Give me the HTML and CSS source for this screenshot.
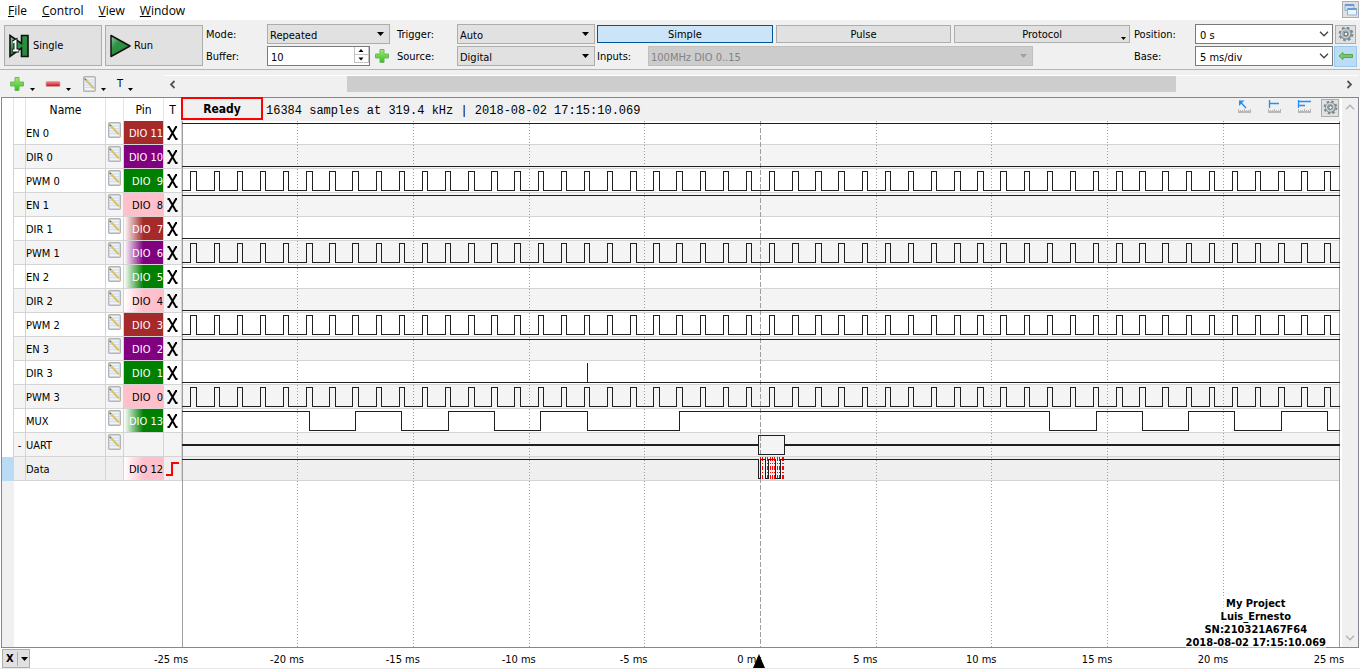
FILE: index.html
```
<!DOCTYPE html>
<html lang="en">
<head>
<meta charset="utf-8">
<title>Logic Analyzer</title>
<link rel="stylesheet" href="styles.css">
</head>
<body>
<svg class="defs" aria-hidden="true">
  <defs>
    <linearGradient id="greenFill" x1="0" y1="0" x2="1" y2="1"><stop offset="0" stop-color="#a5cfae"/><stop offset=".35" stop-color="#2f9143"/><stop offset="1" stop-color="#25883d"/></linearGradient>
    <linearGradient id="plusFill" x1="0" y1="0" x2="0" y2="1"><stop offset="0" stop-color="#a4ec7a"/><stop offset="1" stop-color="#2fbe1c"/></linearGradient>
    <linearGradient id="minusFill" x1="0" y1="0" x2="0" y2="1"><stop offset="0" stop-color="#f08a8a"/><stop offset="1" stop-color="#c40d1c"/></linearGradient>
  </defs>
  <symbol id="plus" viewBox="0 0 16 16"><path d="M6 1.500h4v4.500h4.500v4H10v4.500H6V10H1.500V6H6z" fill="url(#plusFill)" stroke="#6fb85c"/></symbol>
  <symbol id="minus" viewBox="0 0 16 16"><rect x="1" y="5.500" width="14" height="5" rx="1" fill="url(#minusFill)" stroke="#d9a0a3" stroke-width=".8"/></symbol>
  <symbol id="note" viewBox="0 0 13 16"><rect x=".7" y=".7" width="11.600" height="14.600" rx="1" fill="#edf3fa" stroke="#b4b4b4" stroke-width="1.400"/><path d="M2 4h9M2 6.500h9M2 9h9M2 11.500h9" stroke="#c9dcf0"/><path d="M2.500 3.500l8.500 9" stroke="#d9c26a" stroke-width="2"/><path d="M1.500 2.500l1.500 1.500" stroke="#777" stroke-width="1.400"/></symbol>
  <symbol id="caret" viewBox="0 0 7 4"><path d="M0 0h7L3.500 4z"/></symbol>
  <symbol id="chevron" viewBox="0 0 10 6"><path d="M1 .8l4 4 4-4" fill="none" stroke="currentColor" stroke-width="1.300"/></symbol>
  <symbol id="gear" viewBox="0 0 16 16"><circle cx="8" cy="8" r="6.300" fill="none" stroke="#7d8a92" stroke-width="2.200" stroke-dasharray="2.700 2.248"/><circle cx="8" cy="8" r="4.200" fill="none" stroke="#7d8a92" stroke-width="3"/><circle cx="7.700" cy="7.700" r="4" fill="none" stroke="#cbd4d9" stroke-width="1.600"/><circle cx="8" cy="8" r="2" fill="#f0f0f0" stroke="#4c5961"/></symbol>
  <symbol id="ruler" viewBox="0 0 15 13"><path d="M1 12h13" stroke="#a0a0a0" stroke-width="1.400"/><path d="M1.500 9v3M3.500 10v2M5.500 10v2M7.500 9v3M9.500 10v2M11.500 10v2M13.500 9v3" stroke="#b5b5b5"/></symbol>
</svg>

<header class="menubar">
  <nav class="menus" aria-label="Main menu">
    <a href="#file"><u>F</u>ile</a><a href="#control"><u>C</u>ontrol</a><a href="#view"><u>V</u>iew</a><a href="#window"><u>W</u>indow</a>
  </nav>
  <button class="window-button" aria-label="Windows"><svg width="13" height="13" viewBox="0 0 13 13"><path d="M1 1.500h9v6H1z" fill="#cfe0f5" stroke="#8fb3de"/><path d="M1 2h9" stroke="#6d9bd0" stroke-width="2"/><path d="M3.500 5.500h9v6.500h-9z" fill="#eef4fc" stroke="#8fb3de"/><path d="M3.500 6h9" stroke="#6d9bd0" stroke-width="2"/></svg></button>
</header>

<section class="toolbar" aria-label="Acquisition">
  <button class="big"><svg width="22" height="26" viewBox="0 0 22 26"><path d="M2 2.500l11.500 8V2.500H20v21h-6.500V15L2 23.500z" fill="url(#greenFill)" stroke="#111" stroke-width="1.600"/><path d="M5 9.500L7.500 8v9.500M4.500 17.500H11" fill="none" stroke="#111" stroke-width="4"/><path d="M5 9.500L7.500 8v9.500M5 17.500h5.500" fill="none" stroke="#fff" stroke-width="2"/></svg>Single</button>
  <button class="big"><svg width="22" height="26" viewBox="0 0 22 26"><path d="M2 2.500L21 13 2 23.500z" fill="url(#greenFill)" stroke="#111" stroke-width="1.500" stroke-linejoin="round"/></svg>Run</button>
  <div class="fields acquisition">
    <label for="mode">Mode:</label>
    <span class="picker"><select id="mode"><option>Repeated</option></select><svg class="caret"><use href="#caret"/></svg></span>
    <label for="trigger">Trigger:</label>
    <span class="picker"><select id="trigger"><option>Auto</option></select><svg class="caret"><use href="#caret"/></svg></span>
    <label for="buffer">Buffer:</label>
    <span class="buffer"><span class="spin"><input id="buffer" type="text" inputmode="numeric" value="10"><svg class="steps" width="15" height="16" viewBox="0 0 15 16"><path d="M.5 0v15.500M14.500 0v16M0 7.500h15M0 15.500h15" stroke="#c3c3c3" fill="none"/><path d="M4.500 5h5L7 2zM4.500 10.500h5L7 13.500z"/></svg></span><button class="plain" aria-label="Add buffer"><svg width="16" height="16"><use href="#plus"/></svg></button></span>
    <label for="source">Source:</label>
    <span class="picker"><select id="source"><option>Digital</option></select><svg class="caret"><use href="#caret"/></svg></span>
  </div>
  <div class="trigger-panel">
    <div class="tabs"><button class="active">Simple</button><button>Pulse</button><button>Protocol<svg class="corner"><use href="#caret"/></svg></button></div>
    <div class="inputs"><label for="inputs">Inputs:</label><span class="picker"><select id="inputs" disabled><option>100MHz DIO 0..15</option></select><svg class="caret"><use href="#caret"/></svg></span></div>
  </div>
  <div class="fields timing">
    <label for="position">Position:</label>
    <span class="picker light"><select id="position"><option>0 s</option></select><svg class="chevron"><use href="#chevron"/></svg></span>
    <button class="square" aria-label="Time settings"><svg width="16" height="16"><use href="#gear"/></svg></button>
    <label for="base">Base:</label>
    <span class="picker light"><select id="base"><option>5 ms/div</option></select><svg class="chevron"><use href="#chevron"/></svg></span>
    <button class="square blue" aria-label="Fit to screen"><svg width="16" height="10" viewBox="0 0 16 10"><path d="M1 5l4-3.500v2h9.500v3H5v2z" fill="#7ccb62" stroke="#4f9f47" stroke-width=".9"/></svg></button>
  </div>
</section>

<section class="channelbar" aria-label="Channels">
  <div class="tools">
    <button class="tool" aria-label="Add channel"><svg width="16" height="16"><use href="#plus"/></svg><svg class="mini"><use href="#caret"/></svg></button>
    <button class="tool" aria-label="Remove channel"><svg width="16" height="16"><use href="#minus"/></svg><svg class="mini"><use href="#caret"/></svg></button>
    <button class="tool" aria-label="Edit channel"><svg width="13" height="16"><use href="#note"/></svg><svg class="mini"><use href="#caret"/></svg></button>
    <button class="tool" aria-label="Trigger type">T<svg class="mini"><use href="#caret"/></svg></button>
  </div>
  <div class="timescroll">
    <button class="step" aria-label="Scroll left"><svg width="7" height="9" viewBox="0 0 7 9"><path d="M5.500 1L2 4.500 5.500 8" fill="none" stroke="#555" stroke-width="1.800"/></svg></button>
    <span class="before"></span><span class="thumb"></span><span class="after"></span>
    <button class="step" aria-label="Scroll right"><svg width="7" height="9" viewBox="0 0 7 9"><path d="M1.500 1L5 4.500 1.500 8" fill="none" stroke="#555" stroke-width="1.800"/></svg></button>
  </div>
</section>

<main class="frame">
  <div class="channels">
    <table>
      <colgroup><col class="c-mark"><col class="c-fold"><col class="c-name"><col class="c-edit"><col class="c-pin"><col class="c-trig"></colgroup>
      <thead><tr><th></th><th></th><th>Name</th><th></th><th>Pin</th><th>T</th></tr></thead>
      <tbody id="channels"></tbody>
    </table>
    <div class="gutter"></div>
  </div>
  <section class="plot" aria-label="Waveforms">
    <div class="status">
      <strong class="ready">Ready</strong>
      <span class="info">16384 samples at 319.4 kHz | 2018-08-02 17:15:10.069</span>
      <div class="views">
        <button class="plain" aria-label="Pointer"><svg width="15" height="13" viewBox="0 0 15 13"><use href="#ruler"/><path d="M2.500 1l6.500 7" fill="none" stroke="#1e90ff" stroke-width="1.400"/><path d="M2 .5h5.500L2 6z" fill="#1e90ff"/></svg></button>
        <button class="plain" aria-label="Single marker"><svg width="15" height="13" viewBox="0 0 15 13"><use href="#ruler"/><path d="M2.500 0v8M3 3.500h9" fill="none" stroke="#1e90ff" stroke-width="1.300"/></svg></button>
        <button class="plain" aria-label="Multiple markers"><svg width="15" height="13" viewBox="0 0 15 13"><use href="#ruler"/><path d="M1.500 0v8M2 1.500h12M2 5.500h6" fill="none" stroke="#1e90ff" stroke-width="1.300"/></svg></button>
        <button class="square" aria-label="Plot settings"><svg width="15" height="15"><use href="#gear"/></svg></button>
      </div>
    </div>
    <div class="traces">
      <div id="waves"></div>
      <svg class="grid" id="grid" viewBox="0 0 1158 526" preserveAspectRatio="none"></svg>
      <p class="project">My Project<br>Luis_Ernesto<br>SN:210321A67F64<br>2018-08-02 17:15:10.069</p>
    </div>
  </section>
  <div class="vscroll">
    <svg class="up" width="10" height="6"><use href="#chevron"/></svg>
    <svg width="10" height="6"><use href="#chevron"/></svg>
  </div>
</main>

<footer class="axis">
  <button class="axis-button"><b>X</b><svg class="caret"><use href="#caret"/></svg></button>
  <div class="ticks">
    <span>-25 ms</span><span>-20 ms</span><span>-15 ms</span><span>-10 ms</span><span>-5 ms</span>
    <span class="zero">0 ms<svg class="marker" width="12" height="14" viewBox="0 0 12 14"><path d="M6 0l6 14H0z"/></svg></span>
    <span>5 ms</span><span>10 ms</span><span>15 ms</span><span>20 ms</span><span>25 ms</span>
  </div>
</footer>
<script src="app.js"></script>
</body>
</html>
```

FILE: styles.css
```
* { box-sizing: border-box; }
html, body { height: 100%; }
body {
  margin: 0;
  display: flex;
  flex-direction: column;
  background: #fff;
  color: #000;
  font: 11px/14px "DejaVu Sans Condensed", "Noto Sans", sans-serif;
}
button, select, input { font: inherit; color: inherit; margin: 0; border-radius: 0; }
button { padding: 0; background: none; border: 0; }
svg { display: block; flex: none; }
.defs { position: absolute; width: 0; height: 0; }

.menubar {
  display: flex;
  justify-content: space-between;
  height: 21px;
  border-bottom: 1px solid #f0f0f0;
}
.menus { display: flex; gap: 15px; padding-left: 8px; font: 12px/22px "Open Sans", sans-serif; }
.menus a { color: #000; text-decoration: none; }
.window-button {
  display: grid;
  place-items: center;
  width: 17px;
  height: 17px;
  margin: 1px 1px 0 0;
  background: #e1e1e1;
  border: 1px solid #adadad;
}

.toolbar {
  display: flex;
  padding: 3px 4px 3px;
  height: 49px;
  background: #f0f0f0;
  border-bottom: 1px solid #b4b4b4;
}
.big {
  display: flex;
  align-items: center;
  gap: 3px;
  width: 98px;
  height: 41px;
  margin: 1px 3px 0 0;
  padding-left: 3px;
  background: #e1e1e1;
  border: 1px solid #adadad;
}
.fields { display: grid; grid-template-rows: 20px 20px; row-gap: 2px; align-items: center; }
.fields label, .inputs label { padding-top: 1px; }
.acquisition { grid-template-columns: 61px 123px 7px 60px 138px; }
.acquisition > :nth-child(4n + 3) { grid-column: 4; }
.timing { grid-template-columns: 61px 138px 23px; margin-left: 4px; }
.picker { position: relative; display: block; height: 20px; }
.picker select {
  appearance: none;
  display: block;
  width: 100%;
  height: 100%;
  padding: 3px 2px 0;
  background: #e1e1e1;
  border: 1px solid #adadad;
}
.picker.light select { background: #fff; border-color: #7a7a7a; padding-left: 4px; }
.picker select:disabled { background: #ccc; border-color: #bfbfbf; color: #838383; opacity: 1; }
.picker select:disabled + .caret { fill: #a0a0a0; }
.caret { width: 7px; height: 4px; }
.picker .caret { position: absolute; right: 6px; top: 8px; pointer-events: none; }
.chevron { position: absolute; right: 4px; top: 7px; width: 10px; height: 6px; color: #444; pointer-events: none; }
.buffer { display: flex; align-items: center; gap: 4px; }
.spin { position: relative; flex: 1; height: 20px; }
.spin input { width: 100%; height: 20px; padding: 2px 3px 0; background: #fff; border: 1px solid #7a7a7a; }
.steps { position: absolute; right: 1px; top: 1px; height: 16px; }

.trigger-panel { flex: 1; min-width: 0; margin-left: 2px; }
.tabs { display: grid; grid-template-columns: repeat(3, 1fr); gap: 3px; padding-top: 1px; }
.tabs button { position: relative; height: 18px; padding-top: 2px; background: #e1e1e1; border: 1px solid #adadad; }
.tabs .active { background: #cce4f7; border-color: #005499; }
.corner { position: absolute; right: 3px; bottom: 2px; width: 5px; height: 3px; }
.inputs { display: flex; align-items: center; margin-top: 3px; }
.inputs label { width: 51px; }
.inputs .picker { flex: 1; max-width: 385px; }
.square { display: grid; place-items: center; width: 21px; height: 19px; background: #e1e1e1; border: 1px solid #adadad; }
.timing .square { margin-left: 2px; }
.timing .square.blue { width: 23px; height: 21px; margin-left: 1px; background: #bcdcf4; border-color: #99c9ef; }

.channelbar { display: flex; height: 27px; padding: 5px 2px 5px 9px; background: #f0f0f0; }
.tools { display: flex; width: 155px; }
.tool { display: flex; align-items: center; gap: 5px; width: 36px; height: 18px; }
.tool:nth-child(3) { padding-left: 2px; }
.mini { width: 5px; height: 3px; margin-top: 10px; }
.timescroll { display: flex; flex: 1; border-top: 1px solid #fff; height: 17px; }
.step { display: grid; place-items: center; width: 17px; height: 16px; }
.before { flex: 166; }
.thumb { flex: 829; background: #cdcdcd; }
.after { flex: 165; }

.frame {
  display: flex;
  flex: 1;
  min-height: 0;
  margin: 0 1px;
  border: 1px solid #828790;
}
.channels { display: flex; flex-direction: column; width: 180px; }
.gutter { flex: 1; width: 12px; background: #f0f0f0; }
table { width: 180px; table-layout: fixed; border-collapse: separate; border-spacing: 0; }
.c-mark, .c-fold { width: 12px; }
.c-name { width: 80px; }
.c-edit, .c-trig { width: 18px; }
.c-pin { width: 40px; }
th { height: 23px; padding: 0; border-right: 1px solid #e3e3e3; font-weight: normal; font-size: 12px; }
td { height: 24px; padding: 2px 0 0; border-right: 1px solid #d4d4d4; border-bottom: 1px solid #d4d4d4; white-space: nowrap; }
td:first-child { border-bottom: 0; background: #fff; }
tbody tr:nth-child(even), .wave:nth-child(even) { background: #f4f4f4; }
tbody tr.selected, .wave.selected { background: #efefef; }
tr.selected td:first-child { background: #b9dcf4; }
.fold { text-align: center; }
.edit { padding: 0 0 5px 2px; vertical-align: middle; }
.pin { text-align: right; color: #fff; }
.brown { background: #a52a2a; }
.purple { background: #800080; }
.green { background: #008000; }
.pink { background: #ffc0cb; color: #000; }
.brown.fade { background: linear-gradient(90deg, #fff, #a52a2a 50%); }
.purple.fade { background: linear-gradient(90deg, #fff, #800080 50%); }
.green.fade { background: linear-gradient(90deg, #fff, #008000 50%); }
.pink.fade { background: linear-gradient(90deg, #fff, #ffc0cb 50%); }
.trig { padding: 0; }
.trig svg { margin: 0 auto; }

.plot { display: flex; flex-direction: column; flex: 1; min-width: 0; }
.status { display: flex; align-items: center; height: 23px; background: #f0f0f0; }
.ready {
  width: 82px;
  height: 23px;
  margin: -2px 0 0 -1px;
  border: 2px solid #f00;
  font-size: 12px;
  line-height: 20px;
  text-align: center;
}
.info { padding: 2px 0 0 3px; font: 12px/14px "Liberation Mono", monospace; white-space: nowrap; }
.views { display: flex; align-items: center; gap: 15px; margin-left: auto; padding-right: 1px; }
.views .plain { margin-bottom: 6px; }
.views .square { width: 18px; height: 18px; margin: 0 0 4px -6px; }
.traces { position: relative; flex: 1; min-height: 0; }
.wave { height: 24px; border-bottom: 1px solid #d4d4d4; }
.wave svg { position: relative; z-index: 2; width: 100%; height: 24px; overflow: visible; }
.wave path { fill: none; stroke: #202020; vector-effect: non-scaling-stroke; shape-rendering: crispEdges; }
.wave .thick { stroke-width: 2px; }
.wave .samples { stroke: #f00; stroke-dasharray: 4 2 1 2; }
.grid { position: absolute; inset: 0; z-index: 1; width: 100%; height: 100%; }
.grid path { fill: none; stroke: #9f9f9f; stroke-dasharray: 1 2; vector-effect: non-scaling-stroke; shape-rendering: crispEdges; }
.grid .edge { stroke-dasharray: none; }
.grid .origin { stroke-dasharray: 5 2; }
.project {
  position: absolute;
  right: 14px;
  bottom: -2px;
  z-index: 3;
  margin: 0;
  background: rgba(255, 255, 255, .5);
  font-weight: bold;
  line-height: 13px;
  text-align: center;
}
.vscroll {
  display: flex;
  flex-direction: column;
  justify-content: space-between;
  align-items: center;
  width: 16px;
  margin-left: 2px;
  padding: 6px 0;
  background: #f0f0f0;
  color: #b0b0b0;
}
.up { transform: rotate(180deg); }

.axis { display: flex; height: 21px; margin-bottom: 3px; border-bottom: 1px solid #e8e8e8; }
.axis-button { display: flex; align-items: center; width: 28px; height: 19px; margin: 1px 0 0 2px; padding-left: 3px; background: #e1e1e1; border: 1px solid #adadad; }
.axis-button b { width: 12px; height: 14px; border-right: 1px solid #adadad; text-align: left; }
.axis-button .caret { margin-left: 3px; }
.ticks { display: flex; flex: 1; justify-content: space-between; margin: 5px 15px 0 124px; }
.ticks span { position: relative; width: 32px; text-align: center; white-space: nowrap; }
.marker { position: absolute; left: 20px; top: 1px; }
```

FILE: app.js
```
const START = 182;
const END = 1340;

const low = "21.5";
const high = "2.5";

// Builds a path from a starting level and the x positions where it toggles.
function trace(level, edges) {
  let y = level ? high : low;
  let d = `M0 ${y}`;
  for (const x of edges) {
    y = y === high ? low : high;
    d += `H${x - START + 0.5}V${y}`;
  }
  return `<path d="${d}H${END - START}"/>`;
}

const pwmEdges = [];
for (let n = 0; n < 50; n++) {
  const rise = 190.49 + 23.142 * n;
  pwmEdges.push(Math.round(rise), Math.round(rise + 5.4));
}

const up = trace(true, []);
const down = trace(false, []);
const pwm = trace(false, pwmEdges);
const mux = trace(true, [309, 355, 401, 448, 494, 540, 587, 679, 1049, 1096, 1142, 1188, 1234, 1281, 1327]);
const spike = down + `<path d="M405.5 2V21"/>`;
const uart = `<path class="thick" d="M0 12H576M603 12H1158"/><path d="M576.5 2.5H602.500V21.500H576.500Z"/>`;
const samples = [760, 762, 765, 767, 770, 772, 774, 777, 779, 782, 783]
  .map(x => `M${x - START + 0.5} 0V22`).join("");
const data = `<path class="samples" d="${samples}"/>` + trace(true, [758, 760, 765, 768, 775, 780]);

const rows = [
  ["EN 0", 11, "brown", up], ["DIR 0", 10, "purple", down], ["PWM 0", 9, "green", pwm],
  ["EN 1", 8, "pink", up], ["DIR 1", 7, "brown fade", down], ["PWM 1", 6, "purple fade", pwm],
  ["EN 2", 5, "green fade", up], ["DIR 2", 4, "pink fade", down], ["PWM 2", 3, "brown", pwm],
  ["EN 3", 2, "purple", up], ["DIR 3", 1, "green", spike], ["PWM 3", 0, "pink", pwm],
  ["MUX", 13, "green fade", mux], ["UART", null, "", uart], ["Data", 12, "pink fade", data]
];

const note = `<svg width="13" height="16"><use href="#note"/></svg>`;
const cross = `<svg width="12" height="14" viewBox="0 0 12 14"><path d="M.5 1H2L9 13h1.500M10 1H9L2 13H.5" stroke="#000" stroke-width="2" fill="none"/></svg>`;
const edge = `<svg width="13" height="14" viewBox="0 0 13 14"><path d="M0 13h6V1h7" stroke="#f00" stroke-width="2" fill="none"/></svg>`;

document.getElementById("channels").innerHTML = rows.map(([name, pin, color]) => {
  const isData = name === "Data";
  const label = pin === null ? "" : `DIO ${pin < 10 ? "&nbsp;" : ""}${pin}`;
  const mark = pin === null ? "" : isData ? edge : cross;
  return `<tr class="${isData ? "selected" : ""}"><td></td><td class="fold">${pin === null ? "-" : ""}</td><td>${name}</td>` +
    `<td class="edit">${isData ? "" : note}</td><td class="pin ${color}">${label}</td><td class="trig">${mark}</td></tr>`;
}).join("");

document.getElementById("waves").innerHTML = rows.map(([name, , , shape]) =>
  `<div class="wave ${name === "Data" ? "selected" : ""}"><svg viewBox="0 0 1158 24" preserveAspectRatio="none">${shape}</svg></div>`
).join("");

document.getElementById("grid").innerHTML = [182, 297, 413, 529, 644, 760, 876, 991, 1107, 1223, 1339].map((x, i) => {
  const kind = i === 0 || i === 10 ? "edge" : i === 5 ? "origin" : "";
  return `<path class="${kind}" d="M${x - START + 0.5} 0V526"/>`;
}).join("");
```
